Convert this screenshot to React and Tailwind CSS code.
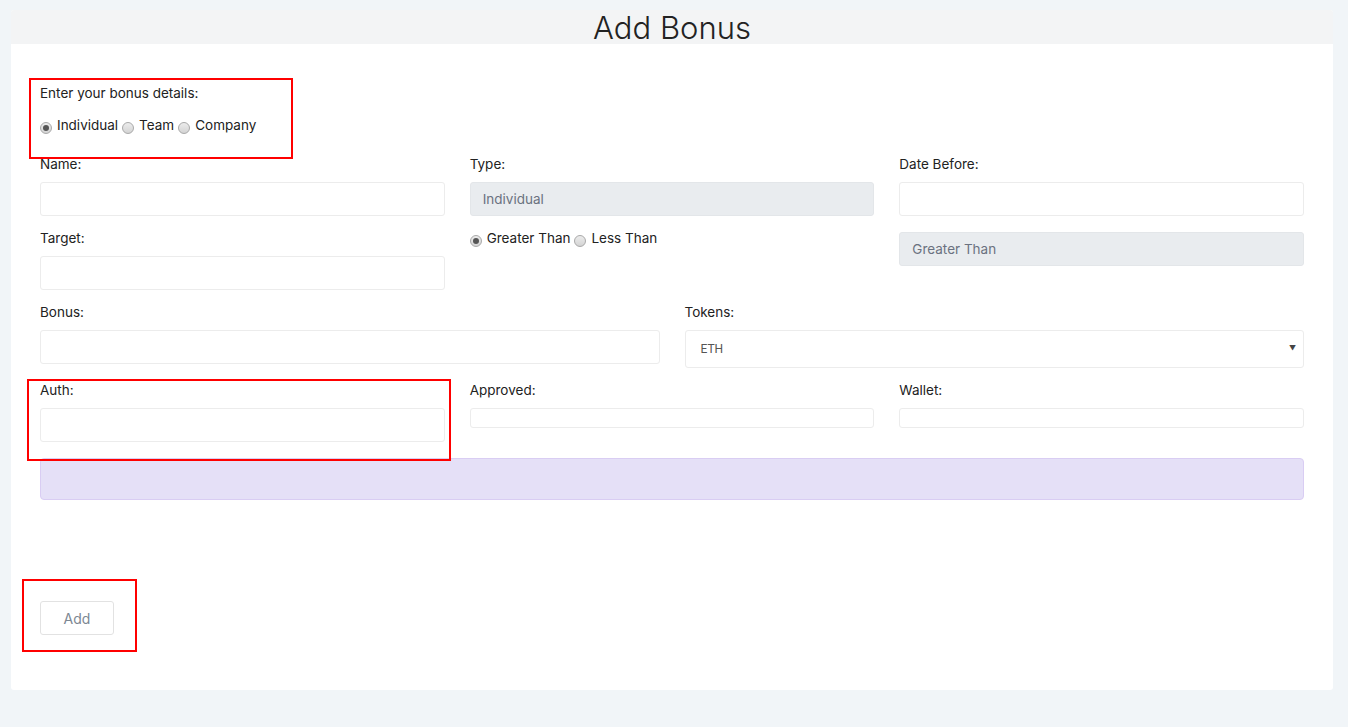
import React, { useState } from 'react'

const font = { fontFamily: 'Inter, "Open Sans", sans-serif' }

const Radio = ({ checked, label, onClick }) => (
  <label className="inline-flex items-center cursor-pointer" onClick={onClick}>
    <span className="relative top-[3px] w-[12px] h-[12px] rounded-full border border-[#a9a9a9] bg-gradient-to-b from-[#ececec] to-[#d4d4d4] flex items-center justify-center">
      {checked && <span className="w-[6px] h-[6px] rounded-full bg-[#555]" />}
    </span>
    <span className="ml-[5px] mr-[4px] text-[13.5px] text-[#222]">{label}</span>
  </label>
)

const Field = ({ label, children }) => (
  <div className="flex flex-col">
    <div className="h-[20px] leading-[20px] text-[13.5px] text-[#222] mb-[8px]">{label}</div>
    {children}
  </div>
)

const Input = ({ h = 'h-[34px]' }) => (
  <input
    type="text"
    className={`${h} w-full rounded-[3px] border border-[#ececec] bg-white px-3 text-[13px] outline-none`}
  />
)

const ReadOnly = ({ value }) => (
  <div className="h-[34px] w-full rounded-[3px] border border-[#e3e6e9] bg-[#e9ecef] px-[12px] flex items-center text-[13.5px] text-[#6b7280]">
    {value}
  </div>
)

const Outline = ({ className }) => (
  <div className={`pointer-events-none absolute border-2 border-[#ff0000] ${className}`} />
)

export default function App() {
  const [kind, setKind] = useState('Individual')
  const [cmp, setCmp] = useState('Greater Than')

  return (
    <div className="min-h-[727px] bg-[#f1f5f8] pt-[10px] pb-[38px]" style={font}>
      <div className="ml-[11px] mr-[15px] rounded-[3px] bg-white">
        <div className="h-[34px] rounded-t-[3px] bg-[#f3f4f5] flex items-center justify-center">
          <h1 className="text-[31px] font-light text-[#222] leading-[34px] mt-[1px]">Add Bonus</h1>
        </div>

        <div className="px-[29px] pt-[34px] pb-[55px]">
          <div className="relative h-[76px] pt-[5px]">
            <Outline className="-left-[11px] top-0 w-[264px] h-[81px]" />
            <div className="h-[20px] leading-[20px] text-[13.5px] text-[#222]">Enter your bonus details:</div>
            <div className="mt-[12px] h-[20px] leading-[20px] flex items-center">
              {['Individual', 'Team', 'Company'].map((k) => (
                <Radio key={k} label={k} checked={kind === k} onClick={() => setKind(k)} />
              ))}
            </div>
          </div>

          <div className="grid grid-cols-3 gap-x-[25px]">
            <Field label="Name:"><Input /></Field>
            <Field label="Type:"><ReadOnly value={kind} /></Field>
            <Field label="Date Before:"><Input /></Field>
          </div>

          <div className="grid grid-cols-3 gap-x-[25px] mt-[12px]">
            <Field label="Target:"><Input /></Field>
            <div className="h-[20px] leading-[20px] flex items-center">
              {['Greater Than', 'Less Than'].map((k) => (
                <Radio key={k} label={k} checked={cmp === k} onClick={() => setCmp(k)} />
              ))}
            </div>
            <div className="pt-[4px]"><ReadOnly value={cmp} /></div>
          </div>

          <div className="grid grid-cols-2 gap-x-[25px] mt-[12px]">
            <Field label="Bonus:"><Input /></Field>
            <Field label="Tokens:">
              <div className="relative h-[38px] rounded-[3px] border border-[#ececec] bg-white flex items-center px-[15px]">
                <span className="text-[12px] text-[#555]" style={{ fontFamily: '"Liberation Sans Narrow", Roboto, sans-serif' }}>ETH</span>
                <span className="ml-auto -mr-[8px] text-[7px] text-[#444]">▼</span>
              </div>
            </Field>
          </div>

          <div className="grid grid-cols-3 gap-x-[25px] mt-[12px]">
            <div className="relative">
              <Outline className="-left-[13px] -top-[1px] w-[424px] h-[82px]" />
              <Field label="Auth:"><Input /></Field>
            </div>
            <Field label="Approved:"><Input h="h-[20px]" /></Field>
            <Field label="Wallet:"><Input h="h-[20px]" /></Field>
          </div>

          <div className="mt-[16px] h-[42px] rounded-[4px] border border-[#d9cdf3] bg-[#e5e0f7]" />

          <div className="relative mt-[101px] w-[74px]">
            <Outline className="-left-[18px] -top-[22px] w-[115px] h-[73px]" />
            <button type="button" className="h-[34px] w-[74px] rounded-[3px] border border-[#e2e2e2] bg-white text-[14px] text-[#7c8793]">
              Add
            </button>
          </div>
        </div>
      </div>
    </div>
  )
}
